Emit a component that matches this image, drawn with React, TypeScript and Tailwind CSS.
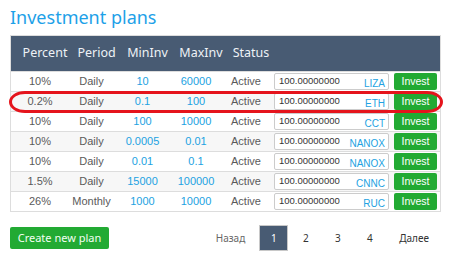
import React from 'react'

interface Plan {
  percent: string
  period: string
  min: string
  max: string
  status: string
  amount: string
  currency: string
}

const PLANS: Plan[] = [
  { percent: '10%', period: 'Daily', min: '10', max: '60000', status: 'Active', amount: '100.00000000', currency: 'LIZA' },
  { percent: '0.2%', period: 'Daily', min: '0.1', max: '100', status: 'Active', amount: '100.00000000', currency: 'ETH' },
  { percent: '10%', period: 'Daily', min: '100', max: '10000', status: 'Active', amount: '100.00000000', currency: 'CCT' },
  { percent: '10%', period: 'Daily', min: '0.0005', max: '0.01', status: 'Active', amount: '100.00000000', currency: 'NANOX' },
  { percent: '10%', period: 'Daily', min: '0.01', max: '0.1', status: 'Active', amount: '100.00000000', currency: 'NANOX' },
  { percent: '1.5%', period: 'Daily', min: '15000', max: '100000', status: 'Active', amount: '100.00000000', currency: 'CNNC' },
  { percent: '26%', period: 'Monthly', min: '1000', max: '10000', status: 'Active', amount: '100.00000000', currency: 'RUC' },
]

const COLS = 'grid grid-cols-[58px_45px_57px_50px_50px_1fr]'
const HEADERS = ['Percent', 'Period', 'MinInv', 'MaxInv', 'Status']

export default function App() {
  return (
    <div className="relative w-[452px] h-[263px] bg-white pt-[5px] font-['Noto_Sans',sans-serif]">
      <h1 className="ml-[10px] text-[18px] leading-[24px] text-[#1da1e8]">Investment plans</h1>

      <div className="ml-[10px] mt-[6px] w-[431px] border border-[#dddddd]">
        <div className={`${COLS} h-[35px] bg-[#485b73] text-[12.5px] text-[#eef2f6]`}>
          {HEADERS.map(h => (
            <div key={h} className="flex items-center justify-center pl-[10px] whitespace-nowrap">
              {h}
            </div>
          ))}
          <div />
        </div>

        {PLANS.map((p, i) => (
          <div
            key={i}
            className={`${COLS} h-[20px] border-t border-[#dddddd] text-[11px] font-['Liberation_Sans',Arial,sans-serif] ${i % 2 === 1 ? 'bg-[#f7f7f7]' : 'bg-white'}`}
          >
            <div className="flex items-center justify-center text-[#5a5a5a]">{p.percent}</div>
            <div className="flex items-center justify-center text-[#5a5a5a]">{p.period}</div>
            <div className="flex items-center justify-center text-[#22a2e2]">{p.min}</div>
            <div className="flex items-center justify-center text-[#22a2e2]">{p.max}</div>
            <div className="flex items-center justify-center text-[#5a5a5a]">{p.status}</div>
            <div className="flex items-end gap-[5px] pl-[3px] pb-[1px]">
              <div className="flex h-[17px] w-[115px] items-center justify-between rounded-[2px] border border-[#cccccc] bg-white pl-[4px] pr-[3px]">
                <span className="text-[9.5px] text-[#333]">{p.amount}</span>
                <span className="mt-[3px] text-[10px] text-[#22a2e2]">{p.currency}</span>
              </div>
              <button className="h-[17px] w-[43px] rounded-[2px] bg-[#22aa33] text-[10.5px] text-white">
                Invest
              </button>
            </div>
          </div>
        ))}
      </div>

      <div className="ml-[10px] mt-[13px] flex w-[431px] items-center justify-between">
        <button className="h-[22px] w-[99px] rounded-[2px] bg-[#22aa33] text-[11px] text-[#f2fff2]">
          Create new plan
        </button>
        <div className="flex items-center text-[10px] text-[#333]">
          <span className="px-[12px] text-[#666]">Назад</span>
          <span className="ml-[2px] flex h-[26px] w-[29px] items-center justify-center border border-[#c8c8c8] bg-[#485b73] text-white">1</span>
          <span className="ml-[3px] flex h-[26px] w-[29px] items-center justify-center">2</span>
          <span className="ml-[3px] flex h-[26px] w-[29px] items-center justify-center">3</span>
          <span className="ml-[3px] flex h-[26px] w-[29px] items-center justify-center">4</span>
          <span className="ml-[3px] px-[12px]">Далее</span>
        </div>
      </div>

      <div className="pointer-events-none absolute left-[9px] top-[91px] h-[22px] w-[434px] rounded-[16px/11px] border-[3px] border-[#e5141c]" />
    </div>
  )
}
